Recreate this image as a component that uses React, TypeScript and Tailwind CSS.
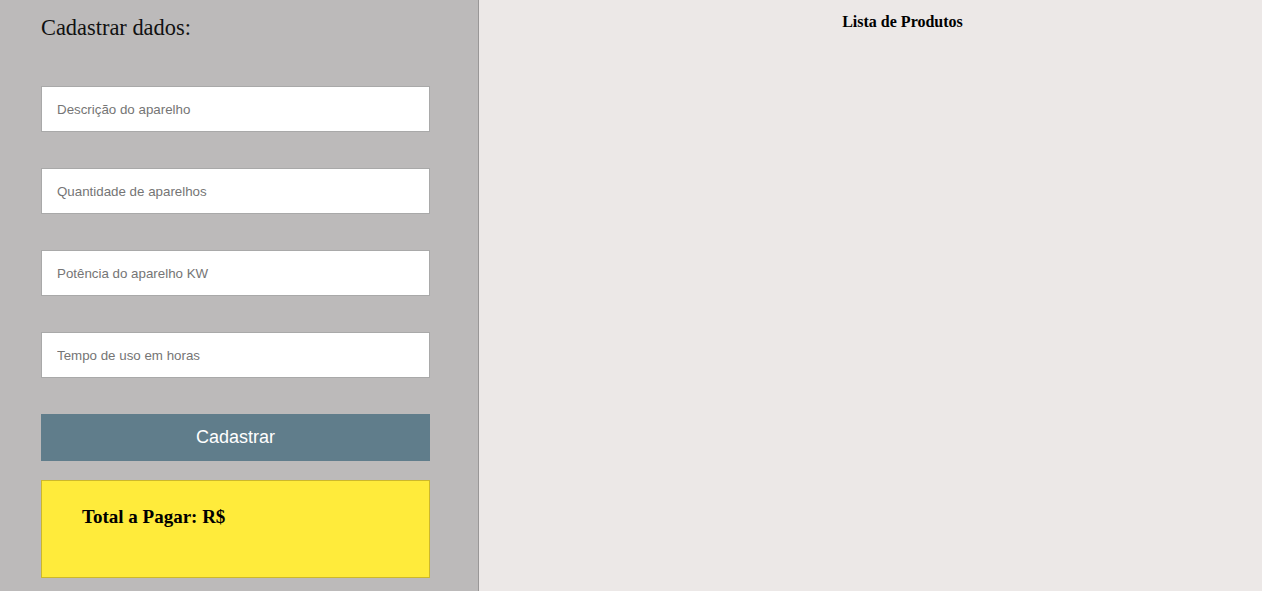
import React from "react";

export default function App() {
  const fields = [
    "Descrição do aparelho",
    "Quantidade de aparelhos",
    "Potência do aparelho KW",
    "Tempo de uso em horas",
  ];
  return (
    <div className="flex h-[591px] w-full overflow-hidden">
      <div className="w-[479px] shrink-0 border-r border-[#999797] bg-[#bcbaba] pl-[41px] pt-[15px]">
        <div
          className="text-[22.4px] leading-[25px] text-[#111]"
          style={{ fontFamily: '"Liberation Serif", serif' }}
        >
          Cadastrar dados:
        </div>
        <div className="mt-[46px] flex w-[389px] flex-col gap-[36px]">
          {fields.map((f) => (
            <input
              key={f}
              placeholder={f}
              className="h-[46px] w-full border border-[#a9a9a9] bg-white px-[15px] text-[13.33px] text-black outline-none placeholder:text-[#757575]"
              style={{ fontFamily: '"Liberation Sans", Arial, sans-serif' }}
            />
          ))}
        </div>
        <button
          className="mt-[36px] h-[47px] w-[389px] bg-[#607d8b] text-[18px] text-white"
          style={{ fontFamily: '"Liberation Sans", Arial, sans-serif' }}
        >
          Cadastrar
        </button>
        <div className="mt-[19px] h-[98px] w-[389px] border border-[#cdb82a] bg-[#ffeb3b] pl-[40px] pt-[25px]">
          <h3
            className="text-[19px] font-bold leading-[21.5px] text-black"
            style={{ fontFamily: '"Liberation Serif", serif' }}
          >
            Total a Pagar: R$
          </h3>
        </div>
      </div>
      <div className="flex-1 bg-[#ece8e7] pl-[64px] pt-[13px]">
        <div
          className="text-center text-[16px] font-bold leading-[18.5px] text-black"
          style={{ fontFamily: '"Liberation Serif", serif' }}
        >
          Lista de Produtos
        </div>
      </div>
    </div>
  );
}
